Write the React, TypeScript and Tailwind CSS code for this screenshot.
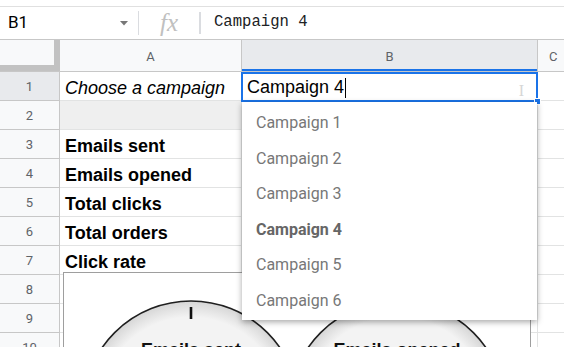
const rows = [
  { n: 1, a: "Choose a campaign", style: "italic" },
  { n: 2, a: "", style: "" },
  { n: 3, a: "Emails sent", style: "font-bold" },
  { n: 4, a: "Emails opened", style: "font-bold" },
  { n: 5, a: "Total clicks", style: "font-bold" },
  { n: 6, a: "Total orders", style: "font-bold" },
  { n: 7, a: "Click rate", style: "font-bold" },
  { n: 8, a: "", style: "" },
  { n: 9, a: "", style: "" },
  { n: 10, a: "", style: "" },
];

const options = ["Campaign 1", "Campaign 2", "Campaign 3", "Campaign 4", "Campaign 5", "Campaign 6"];

function Gauge({ cx, label }: { cx: number; label: string }) {
  return (
    <g>
      <circle cx={cx} cy={136} r={108} fill="url(#dial)" stroke="#1f1f1f" strokeWidth={1.6} />
      <line x1={cx} y1={34} x2={cx} y2={46} stroke="#111" strokeWidth={2.6} />
      <text
        x={cx}
        y={83}
        textAnchor="middle"
        fontFamily="'Liberation Sans', Arial, sans-serif"
        fontWeight="bold"
        fontSize={18}
        fill="#111"
      >
        {label}
      </text>
    </g>
  );
}

export default function App() {
  return (
    <div className="relative w-[564px] h-[347px] overflow-hidden bg-white font-['Liberation_Sans',Arial,sans-serif] text-black">
      {/* toolbar edge */}
      <div className="h-[7px] border-b border-[#e0e0e0]" />

      {/* formula bar */}
      <div className="h-[33px] flex items-center border-b border-[#c7c7c7]">
        <div className="w-[138px] flex items-center justify-between pl-[8px] pr-[10px] font-['Roboto',sans-serif] text-[17px]">
          <span>B1</span>
          <svg width="8" height="5" viewBox="0 0 8 5">
            <path d="M0 0 L8 0 L4 4.5 Z" fill="#777" />
          </svg>
        </div>
        <div className="h-[24px] border-l border-[#dadce0]" />
        <div className="w-[60px] flex justify-center items-center font-['Liberation_Serif',serif] italic text-[25px] text-[#c0c0c0] leading-none pb-[2px]">
          fx
        </div>
        <div className="h-[22px] border-l-2 border-[#dadce0]" />
        <div className="pl-[13px] font-['Liberation_Mono',monospace] text-[15.6px] text-[#202124]">Campaign 4</div>
      </div>

      {/* column headers */}
      <div className="h-[32px] flex border-b border-[#c7c7c7] bg-[#f8f9fa] font-['Roboto',sans-serif] text-[13px] text-[#5f6368]">
        <div className="w-[60px] shrink-0 border-r-[6px] border-b-[6px] border-[#c2c2c2] bg-[#f8f9fa]" />
        <div className="w-[182px] shrink-0 flex items-center justify-center pt-[2px] border-r border-[#c7c7c7]">A</div>
        <div className="w-[296px] shrink-0 flex items-center justify-center pt-[2px] border-r border-[#c7c7c7] bg-[#e8eaed] shadow-[inset_0_-2px_0_#1a73e8]">
          B
        </div>
        <div className="flex-1 flex items-center pl-[11px] pt-[2px]">C</div>
      </div>

      {/* rows */}
      {rows.map((r) => (
        <div key={r.n} className="h-[29px] flex">
          <div
            className={`w-[60px] shrink-0 flex items-center justify-center pt-[1px] border-r border-b border-[#c7c7c7] font-['Roboto',sans-serif] text-[13px] text-[#5f6368] ${
              r.n === 1 ? "bg-[#e8eaed]" : "bg-[#f8f9fa]"
            }`}
          >
            {r.n}
          </div>
          <div
            className={`w-[182px] shrink-0 flex items-end pb-[1px] pl-[5px] border-r border-b border-[#e2e3e3] text-[18px] leading-[22px] whitespace-nowrap ${r.style} ${
              r.n === 2 ? "bg-[#efefef]" : ""
            }`}
          >
            {r.a}
          </div>
          <div className="w-[296px] shrink-0 border-r border-b border-[#e2e3e3]" />
          <div className="flex-1 border-b border-[#e2e3e3]" />
        </div>
      ))}

      {/* floating chart */}
      <div className="absolute left-[63px] top-[272px] w-[468px] h-[120px] border border-[#9e9e9e] bg-white">
        <svg width="468" height="120" viewBox="0 0 468 120">
          <defs>
            <radialGradient id="dial" cx="50%" cy="50%" r="50%">
              <stop offset="85%" stopColor="#f3f3f3" />
              <stop offset="100%" stopColor="#d6d6d6" />
            </radialGradient>
          </defs>
          <Gauge cx={127} label="Emails sent" />
          <Gauge cx={333} label="Emails opened" />
        </svg>
      </div>

      {/* active cell editor */}
      <div className="absolute left-[241px] top-[72px] w-[297px] h-[30px] border-2 border-[#1a73e8] bg-white flex items-center pl-[4px] pt-[1px] text-[18px]">
        <span>Campaign 4</span>
        <span className="ml-[1px] w-px h-[20px] bg-black" />
        <span className="absolute right-[12px] top-[5px] font-['Liberation_Serif',serif] text-[16px] text-[#d6d6d6]">I</span>
        <div className="absolute -right-[5px] -bottom-[5px] w-[7px] h-[7px] bg-[#1a73e8] border border-white" />
      </div>

      {/* dropdown */}
      <div className="absolute left-[242px] top-[102px] w-[295px] pt-[3px] pb-[2px] bg-white shadow-[0_2px_6px_rgba(0,0,0,0.35)] font-['Roboto',sans-serif] text-[16px]">
        {options.map((o) => (
          <div
            key={o}
            className={`h-[35.5px] flex items-center pl-[14px] pt-[1px] ${
              o === "Campaign 4" ? "font-bold text-[#666]" : "text-[#777]"
            }`}
          >
            {o}
          </div>
        ))}
      </div>
    </div>
  );
}
